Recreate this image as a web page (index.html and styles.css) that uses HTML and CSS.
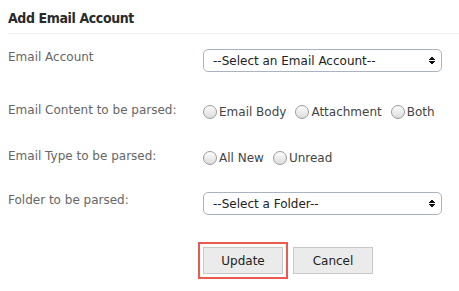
FILE: index.html
```html
<!DOCTYPE html>
<html lang="en">
<head>
  <meta charset="UTF-8">
  <meta name="viewport" content="width=device-width, initial-scale=1.0">
  <title>Add Email Account</title>
  <link rel="stylesheet" href="styles.css">
</head>
<body>
  <div class="panel">
    <h2 class="title">Add Email Account</h2>
    <form class="form">
      <div class="row row-account">
        <label class="label">Email Account</label>
        <div class="select-wrap">
          <select class="select">
            <option>--Select an Email Account--</option>
          </select>
        </div>
      </div>
      <div class="row row-content">
        <label class="label">Email Content to be parsed:</label>
        <div class="options">
          <label class="option"><input type="radio" name="content"> Email Body</label>
          <label class="option"><input type="radio" name="content"> Attachment</label>
          <label class="option"><input type="radio" name="content"> Both</label>
        </div>
      </div>
      <div class="row row-type">
        <label class="label">Email Type to be parsed:</label>
        <div class="options">
          <label class="option"><input type="radio" name="type"> All New</label>
          <label class="option"><input type="radio" name="type"> Unread</label>
        </div>
      </div>
      <div class="row row-folder">
        <label class="label">Folder to be parsed:</label>
        <div class="select-wrap">
          <select class="select">
            <option>--Select a Folder--</option>
          </select>
        </div>
      </div>
      <div class="actions">
        <span class="highlight"><button type="button" class="btn">Update</button></span>
        <button type="button" class="btn">Cancel</button>
      </div>
    </form>
  </div>
</body>
</html>
```

FILE: styles.css
```css
body {
  margin: 0;
  background: #fff;
  font-family: "DejaVu Sans", Verdana, sans-serif;
  font-size: 12px;
}
.panel {
  padding: 0 0 0 8px;
}
.title {
  margin: 0;
  padding: 10px 0 7px;
  font-family: "DejaVu Sans Condensed", "DejaVu Sans", sans-serif;
  font-size: 14px;
  letter-spacing: -0.4px;
  line-height: 16px;
  color: #2b2b2b;
  border-bottom: 1px solid #eee;
}
.row {
  display: grid;
  grid-template-columns: 195px 239px;
  align-items: start;
}
.row-account { margin-top: 15px; height: 23px; }
.row-content { margin-top: 30px; height: 15px; }
.row-type { margin-top: 31px; height: 15px; }
.row-folder { margin-top: 29px; height: 23px; }
.label {
  color: #666;
  line-height: 15px;
  padding-top: 1px;
}
.select-wrap {
  position: relative;
}
.select {
  -webkit-appearance: none;
  appearance: none;
  width: 239px;
  height: 23px;
  margin: 0;
  padding: 0 20px 0 9px;
  border: 1px solid #aab3c2;
  border-radius: 5px;
  background: #fff;
  font-family: "DejaVu Sans", Verdana, sans-serif;
  font-size: 12px;
  color: #222;
}
.select-wrap::after {
  content: "";
  position: absolute;
  right: 7px;
  top: 7px;
  width: 6px;
  height: 9px;
  background:
    linear-gradient(to bottom right, transparent 50%, #111 50%) left top / 3px 4px no-repeat,
    linear-gradient(to bottom left, transparent 50%, #111 50%) right top / 3px 4px no-repeat,
    linear-gradient(to top right, transparent 50%, #111 50%) left bottom / 3px 4px no-repeat,
    linear-gradient(to top left, transparent 50%, #111 50%) right bottom / 3px 4px no-repeat;
  pointer-events: none;
}
.options {
  display: flex;
  gap: 9px;
  padding-top: 3px;
}
.option {
  display: flex;
  align-items: center;
  gap: 2px;
  color: #444;
  line-height: 14px;
}
.option input {
  -webkit-appearance: none;
  appearance: none;
  width: 14px;
  height: 14px;
  margin: 0;
  border: 1px solid #9a9a9a;
  border-radius: 50%;
  background: linear-gradient(#fdfdfd, #dcdcdc);
}
.actions {
  display: flex;
  align-items: center;
  gap: 5px;
  margin: 27px 0 0 190px;
}
.highlight {
  display: inline-flex;
  padding: 3px;
  border: 2px solid #ea5a4f;
}
.btn {
  width: 80px;
  height: 27px;
  margin: 0;
  padding: 0;
  border: 1px solid #c8c8c8;
  background: #ebebeb;
  font-family: "DejaVu Sans", Verdana, sans-serif;
  font-size: 12px;
  color: #222;
}
```
